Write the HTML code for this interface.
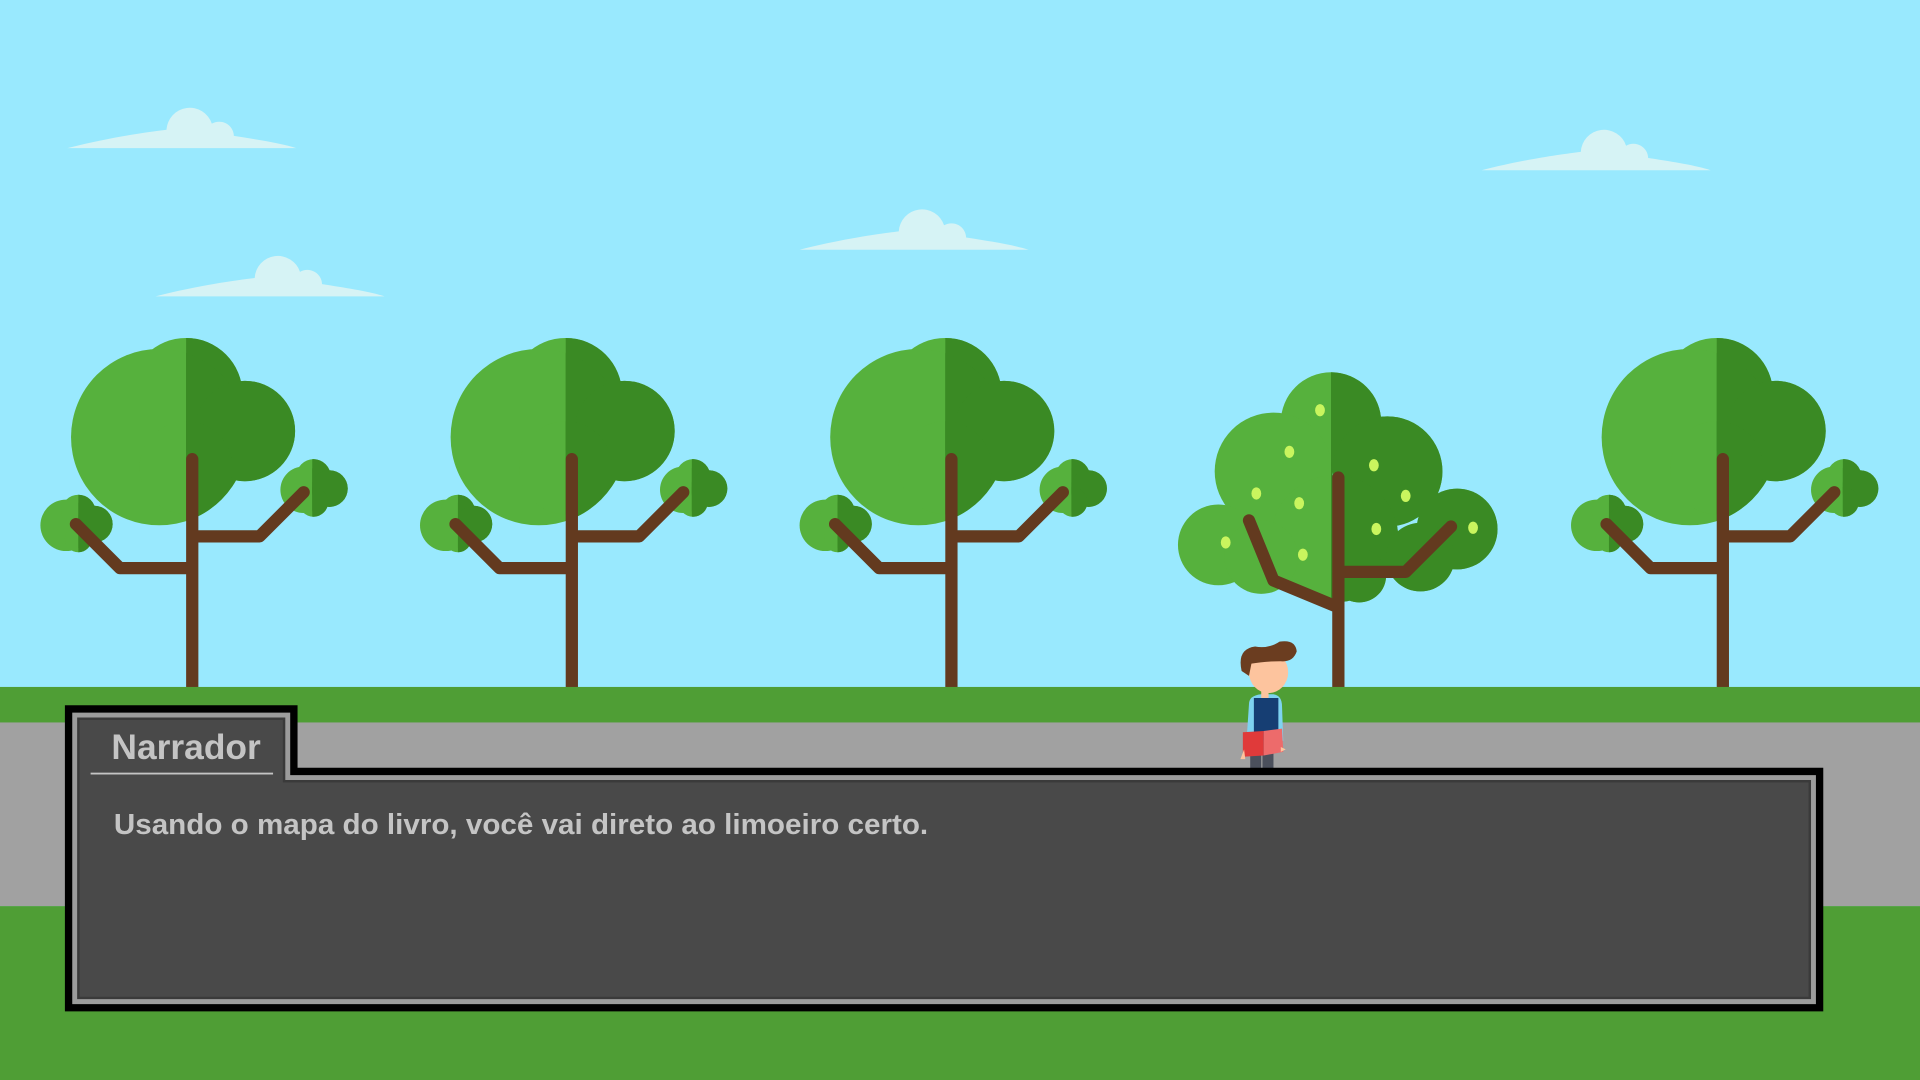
<!DOCTYPE html>
<html><head><meta charset="utf-8"><style>
html,body{margin:0;padding:0;width:1920px;height:1080px;overflow:hidden;background:#99E9FE}
svg{display:block}
</style></head><body>
<svg width="1920" height="1080" viewBox="0 0 1568 882" preserveAspectRatio="none" xmlns="http://www.w3.org/2000/svg">
<defs>
<clipPath id="rh"><rect x="152" y="0" width="300" height="600"/></clipPath>
<clipPath id="rb1"><rect x="255" y="0" width="100" height="600"/></clipPath>
<clipPath id="rb2"><rect x="64" y="0" width="100" height="600"/></clipPath>
<clipPath id="rl"><rect x="1087" y="0" width="300" height="600"/></clipPath>
<g id="canopy">
<circle cx="152" cy="322" r="46"/><circle cx="130" cy="357" r="72"/><circle cx="200" cy="352" r="41"/><circle cx="152" cy="382" r="38"/>
</g>
<g id="b1"><circle cx="248" cy="400" r="19"/><circle cx="256" cy="389" r="14"/><circle cx="269" cy="399" r="15"/><circle cx="256" cy="410" r="12"/></g>
<g id="b2"><circle cx="54" cy="429" r="21"/><circle cx="64" cy="418" r="14"/><circle cx="77" cy="428" r="15"/><circle cx="64" cy="440" r="11"/></g>
<g id="tree">
<use href="#canopy" fill="#56B13D"/><use href="#canopy" fill="#3A8A24" clip-path="url(#rh)"/>
<use href="#b1" fill="#56B13D"/><use href="#b1" fill="#3A8A24" clip-path="url(#rb1)"/>
<use href="#b2" fill="#56B13D"/><use href="#b2" fill="#3A8A24" clip-path="url(#rb2)"/>
<path d="M157,375 V562 M157,438 H212 L248,402 M157,464 H98 L62,428" stroke="#633A1F" stroke-width="10" fill="none" stroke-linecap="round" stroke-linejoin="round"/>
</g>
<path id="cloud" d="M0,0 C35,-9 65,-13 81,-15 A19,19 0 0 1 118,-20 A12,12 0 0 1 136,-10 C155,-7 175,-4 187,0 Z" fill="#D6F3F5"/>
<g id="lc">
<circle cx="1087" cy="345" r="41"/><circle cx="1040" cy="385" r="48"/><circle cx="1133" cy="385" r="45"/><circle cx="995" cy="445" r="33"/><circle cx="1190" cy="432" r="33"/><circle cx="1090" cy="440" r="52"/><circle cx="1030" cy="455" r="30"/><circle cx="1160" cy="455" r="28"/><circle cx="1110" cy="470" r="22"/>
</g>
</defs>
<rect width="1568" height="882" fill="#99E9FE"/>
<use href="#cloud" x="55" y="121"/><use href="#cloud" x="127" y="242"/><use href="#cloud" x="653" y="204"/><use href="#cloud" x="1210" y="139"/>
<use href="#tree"/><use href="#tree" x="310"/><use href="#tree" x="620"/><use href="#tree" x="1250"/>
<use href="#lc" fill="#56B13D"/><use href="#lc" fill="#3A8A24" clip-path="url(#rl)"/>
<g fill="#C9F55E">
<ellipse cx="1078" cy="335" rx="4" ry="5"/><ellipse cx="1053" cy="369" rx="4" ry="5"/><ellipse cx="1122" cy="380" rx="4" ry="5"/><ellipse cx="1026" cy="403" rx="4" ry="5"/><ellipse cx="1061" cy="411" rx="4" ry="5"/><ellipse cx="1148" cy="405" rx="4" ry="5"/><ellipse cx="1124" cy="432" rx="4" ry="5"/><ellipse cx="1001" cy="443" rx="4" ry="5"/><ellipse cx="1064" cy="453" rx="4" ry="5"/><ellipse cx="1203" cy="431" rx="4" ry="5"/>
</g>
<path d="M1093,390 V562 M1093,496 L1040,474 L1020,425 M1093,467 H1148 L1185,430" stroke="#633A1F" stroke-width="10" fill="none" stroke-linecap="round" stroke-linejoin="round"/>
<rect y="561" width="1568" height="30" fill="#4F9E35"/>
<rect y="590" width="1568" height="150" fill="#A1A1A1"/>
<rect y="740" width="1568" height="142" fill="#4F9E35"/>
<!-- character -->
<rect x="1021" y="600" width="9" height="28" fill="#4B505C"/><rect x="1031" y="600" width="9" height="28" fill="#4B505C"/>
<path d="M1020,575 Q1020,568 1030,567 L1040,567 Q1047,568 1047,577 L1048,605 L1018,605 Z" fill="#7ED3F0"/>
<path d="M1024,570 L1044,570 L1044,605 L1024,605 Z" fill="#163E73"/>
<rect x="1030" y="560" width="6" height="10" fill="#FDC49E"/>
<path d="M1015,598 L1032,597 L1032,617 L1015,618 Z" fill="#E03A3A"/><path d="M1032,597 L1047,595 L1048,614 L1032,617 Z" fill="#ED6B6B"/>
<path d="M1016,612 L1013,620 L1017,620 Z M1046,614 L1050,612 L1046,610 Z" fill="#FDC49E"/>
<circle cx="1021" cy="548" r="4" fill="#FDC49E"/>
<ellipse cx="1036" cy="549" rx="16" ry="17" fill="#FDC49E"/>
<path d="M1014,548 Q1010,530 1025,528 Q1036,530 1045,524 Q1058,522 1059,532 Q1056,541 1046,540 Q1032,540 1022,542 L1020,552 Z" fill="#6B3D20"/>
<!-- dialog -->
<path d="M53,576 H243 V627 H1489 V826 H53 Z" fill="#000"/>
<path d="M59,582 H237 V633 H1483 V820 H59 Z" fill="#9C9C9C"/>
<path d="M63,586 H233 V637 H1479 V816 H63 Z" fill="#3A3A3A"/>
<path d="M65,588 H231 V639 H1477 V814 H65 Z" fill="#494949"/>
<text x="91" y="620" font-family="Liberation Sans, sans-serif" font-weight="bold" font-size="28.5" fill="#C4C4C4" textLength="122" lengthAdjust="spacingAndGlyphs">Narrador</text>
<rect x="74" y="631" width="149" height="1.5" fill="#C4C4C4"/>
<text x="93" y="681" font-family="Liberation Sans, sans-serif" font-weight="bold" font-size="23.5" fill="#C4C4C4" textLength="665" lengthAdjust="spacingAndGlyphs">Usando o mapa do livro, você vai direto ao limoeiro certo.</text>
</svg>
</body></html>
